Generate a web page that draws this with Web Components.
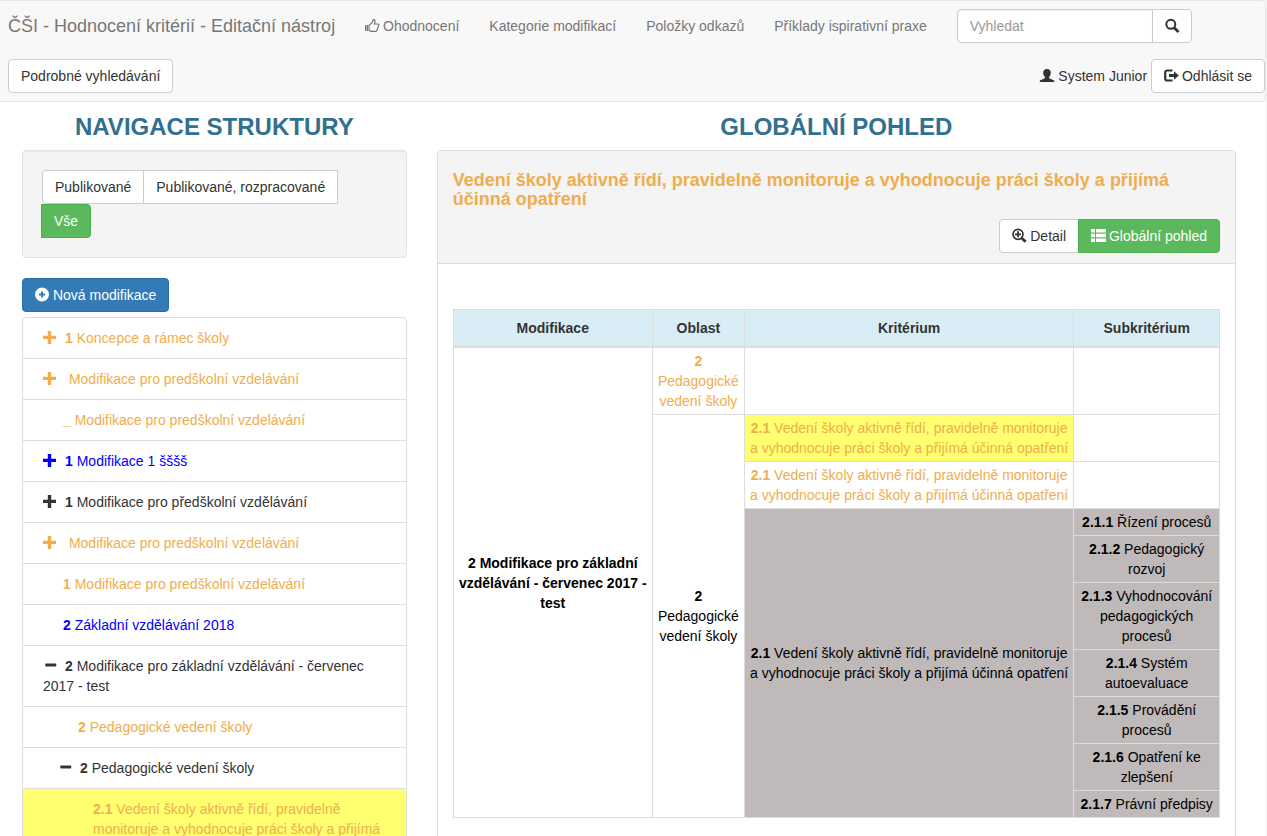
<!DOCTYPE html>
<html lang="cs">
<head>
<meta charset="utf-8">
<title>ČŠI - Hodnocení kritérií - Editační nástroj</title>
<style>
html { background: #fff; }
body { margin: 0; border-right: 1px solid #f4f4f4; font: 14px/20px "Liberation Sans", Arial, sans-serif; color: #333; }
</style>
</head>
<body>
<csi-navbar></csi-navbar>
<csi-layout>
  <csi-heading slot="side">NAVIGACE STRUKTURY</csi-heading>
  <csi-filter slot="side"></csi-filter>
  <csi-button slot="side" kind="primary" icon="plus-sign">Nová modifikace</csi-button>
  <csi-tree slot="side">
    <csi-node tone="draft" mark="plus" code="1">Koncepce a rámec školy</csi-node>
    <csi-node tone="draft" mark="plus">Modifikace pro predškolní vzdelávání</csi-node>
    <csi-node tone="draft" code="_">Modifikace pro predškolní vzdelávání</csi-node>
    <csi-node tone="ready" mark="plus" code="1">Modifikace 1 šššš</csi-node>
    <csi-node mark="plus" code="1">Modifikace pro předškolní vzdělávání</csi-node>
    <csi-node tone="draft" mark="plus">Modifikace pro predškolní vzdelávání</csi-node>
    <csi-node tone="draft" code="1">Modifikace pro predškolní vzdelávání</csi-node>
    <csi-node tone="ready" code="2">Základní vzdělávání 2018</csi-node>
    <csi-node mark="minus" code="2">Modifikace pro základní vzdělávání - červenec 2017 - test</csi-node>
    <csi-node tone="draft" level="1" code="2">Pedagogické vedení školy</csi-node>
    <csi-node level="1" mark="minus" code="2">Pedagogické vedení školy</csi-node>
    <csi-node tone="draft" level="2" selected code="2.1">Vedení školy aktivně řídí, pravidelně monitoruje a vyhodnocuje práci školy a přijímá účinná opatření</csi-node>
  </csi-tree>
  <csi-heading slot="main">GLOBÁLNÍ POHLED</csi-heading>
  <csi-panel slot="main">
    <span slot="title">Vedení školy aktivně řídí, pravidelně monitoruje a vyhodnocuje práci školy a přijímá účinná opatření</span>
    <csi-overview></csi-overview>
  </csi-panel>
</csi-layout>

<script>
const define = (name, html, setup) => {
  const template = document.createElement('template');
  template.innerHTML = html;
  customElements.define(name, class extends HTMLElement {
    constructor() {
      super();
      this.attachShadow({ mode: 'open' }).append(template.content.cloneNode(true));
    }
    connectedCallback() { if (setup) setup(this, this.shadowRoot); }
  });
};

const icons = {
  'thumbs-up': '<path d="M0 6h1v6H0zM1.500 6h1.500v6H1.500z" fill="currentColor"/><path d="M4 6.500 6.800 4 8.300.7c1.900 0 2 1.500 1.300 3.600l-.2.700h3.300c1.200 0 1.400 1.300.9 1.800L12 11.300c-.3.800-.6 1.100-1.400 1.100H6.800c-1.100 0-1.900-.8-2.800-.9z" fill="none" stroke="currentColor" stroke-width="1.200"/>',
  search: '<circle cx="5.800" cy="5.300" r="4.500" fill="none" stroke="currentColor" stroke-width="2"/><path d="m9.200 8.700 4.300 4.300" stroke="currentColor" stroke-width="2.800"/>',
  user: '<path d="M7 0c2.400 0 3.800 1.500 3.800 3.700 0 1.900-.8 3.400-1.700 4.300-.3 1 .1 1.300.9 1.700l3.200 1.300c.8.400 1.100.7 1.100 2H-.3c0-1.300.3-1.600 1.100-2L4 9.700c.8-.4 1.200-.7.9-1.700C4 7.100 3.200 5.600 3.200 3.700 3.200 1.500 4.600 0 7 0z" fill="currentColor"/>',
  'log-out': '<path d="M8.500 1.500H3.200a2 2 0 0 0-2 2v6a2 2 0 0 0 2 2h5.300" fill="none" stroke="currentColor" stroke-width="2.200"/><path d="M5 5h5V2.300l4.800 4.200L10 10.700V8H5z" fill="currentColor"/>',
  'plus-sign': '<path fill-rule="evenodd" d="M7-.5a7 7 0 1 1 0 14 7 7 0 0 1 0-14zM6 3.500v2H4v2h2v2h2v-2h2v-2H8v-2z" fill="currentColor"/>',
  'zoom-in': '<circle cx="6" cy="5.300" r="5" fill="none" stroke="currentColor" stroke-width="1.700"/><path d="M5.100 2.300h1.800v2.100H9v1.800H6.900v2.100H5.100V6.200H3V4.400h2.100z" fill="currentColor"/><path d="m9.600 9 4 3.800" stroke="currentColor" stroke-width="2.800"/>',
  list: '<path d="M0 0h4v3.500H0zM5 0h10v3.500H5zM0 4.700h4v3.500H0zM5 4.700h10v3.500H5zM0 9.400h4v3.500H0zM5 9.400h10v3.500H5z" fill="currentColor"/>',
  plus: '<path d="M4.800 0h3.400v4.700H13V8H8.200v5H4.800V8H0V4.700h4.800z" fill="currentColor"/>',
  minus: '<path d="M3 4.500h9.500a.7.700 0 0 1 .7.700v1.600a.7.700 0 0 1-.7.700H3a.7.700 0 0 1-.7-.7V5.200a.7.700 0 0 1 .7-.7z" fill="currentColor"/>'
};

define('csi-icon', `
  <style>
    :host { display: inline-block; width: 14px; height: 13px; vertical-align: -1px; }
    svg { display: block; width: 15px; height: 13px; overflow: visible; }
  </style>
  <svg viewBox="0 0 15 13" aria-hidden="true"></svg>`,
  (host, root) => { root.querySelector('svg').innerHTML = icons[host.getAttribute('name')] || ''; });

define('csi-button', `
  <style>
    :host { display: inline-block; vertical-align: middle; }
    button { display: block; margin: 0; padding: 6px 12px; border: 1px solid #ccc; border-radius: 4px;
      background: #fff; color: #333; font: inherit; white-space: nowrap; cursor: pointer; }
    :host([kind="primary"]) button { background: #337ab7; border-color: #2e6da4; color: #fff; }
    :host([kind="success"]) button { background: #5cb85c; border-color: #4cae4c; color: #fff; }
    :host([place="first"]) button { border-radius: 4px 0 0 4px; }
    :host([place="middle"]) button { border-radius: 0; }
    :host([place="last"]) button { border-radius: 0 4px 4px 0; }
    :host([place="middle"]), :host([place="last"]) { margin-left: -1px; }
  </style>
  <button type="button"><span></span><slot></slot></button>`,
  (host, root) => {
    const name = host.getAttribute('icon');
    if (name) root.querySelector('span').innerHTML = '<csi-icon name="' + name + '"></csi-icon> ';
    if (host.hasAttribute('label')) root.querySelector('button').setAttribute('aria-label', host.getAttribute('label'));
  });

define('csi-navbar', `
  <style>
    :host { display: block; background: #f8f8f8; border: 1px solid #e7e7e7; border-left: 0; border-radius: 0 4px 4px 0; }
    nav { display: flex; flex-wrap: wrap; align-items: center; }
    a { color: #777; text-decoration: none; padding: 15px; }
    .brand { font-size: 18px; padding-left: 8px; }
    form { display: flex; padding: 8px 15px; }
    input { box-sizing: border-box; width: 196px; height: 34px; margin: 0; padding: 6px 12px; border: 1px solid #ccc;
      border-radius: 4px 0 0 4px; background: #fff; color: #555; font: inherit; box-shadow: inset 0 1px 1px rgba(0,0,0,.075); }
    input::placeholder { color: #999; opacity: 1; }
    .tools { display: flex; flex: 1 0 100%; box-sizing: border-box; align-items: center; justify-content: space-between; padding: 8px 0 8px 8px; }
    .account { display: flex; align-items: center; gap: 4px; }
  </style>
  <nav aria-label="Hlavní">
    <a class="brand" href="#">ČŠI - Hodnocení kritérií - Editační nástroj</a>
    <a href="#"><csi-icon name="thumbs-up"></csi-icon> Ohodnocení</a>
    <a href="#">Kategorie modifikací</a>
    <a href="#">Položky odkazů</a>
    <a href="#">Příklady ispirativní praxe</a>
    <form role="search"><input type="text" placeholder="Vyhledat" aria-label="Vyhledat"><csi-button place="last" label="Hledat" icon="search"></csi-button></form>
    <div class="tools">
      <csi-button>Podrobné vyhledávání</csi-button>
      <div class="account"><span><csi-icon name="user"></csi-icon> System Junior</span><csi-button icon="log-out">Odhlásit se</csi-button></div>
    </div>
  </nav>`);

define('csi-layout', `
  <style>
    :host { display: grid; grid-template-columns: minmax(0, 1fr) minmax(0, 2fr); margin: 0 15px 0 7px; }
    div { padding: 0 15px; }
  </style>
  <div><slot name="side"></slot></div>
  <div><slot name="main"></slot></div>`);

define('csi-heading', `
  <style>
    :host { display: block; }
    h2 { margin: 12px 0 10px; font-size: 24px; line-height: 26px; font-weight: 700; text-align: center; color: #31708f; }
  </style>
  <h2><slot></slot></h2>`);

define('csi-filter', `
  <style>
    :host { display: block; margin-bottom: 20px; padding: 19px; background: #f4f4f4; border: 1px solid #e3e3e3; border-radius: 4px;
      box-shadow: inset 0 1px 1px rgba(0,0,0,.05); }
    div { display: flex; flex-wrap: wrap; }
  </style>
  <div role="group" aria-label="Stav">
    <csi-button place="first">Publikované</csi-button>
    <csi-button place="middle">Publikované, rozpracované</csi-button>
    <csi-button place="last" kind="success">Vše</csi-button>
  </div>`);

define('csi-tree', `
  <style>
    :host { display: block; margin: 5px 0 20px; border: 1px solid #ddd; border-radius: 4px; }
  </style>
  <div role="tree"><slot></slot></div>`);

define('csi-node', `
  <style>
    :host { display: block; padding: 10px 20px; border-bottom: 1px solid #ddd; color: #333; }
    :host([tone="draft"]) { color: #f0ad4e; }
    :host([tone="ready"]) { color: #00f; }
    :host([level="1"]) { padding-left: 35px; }
    :host([level="2"]) { padding-left: 70px; }
    :host([selected]) { background: #ffff70; }
    csi-icon { margin-right: 8px; }
    .indent { padding-left: 20px; }
  </style>
  <div role="treeitem"><span class="lead"></span><b></b> <slot></slot></div>`,
  (host, root) => {
    const mark = host.getAttribute('mark'), code = host.getAttribute('code');
    const lead = root.querySelector('.lead');
    if (mark) lead.innerHTML = '<csi-icon name="' + mark + '"></csi-icon>';
    else if (host.getAttribute('level') !== '2') lead.classList.add('indent');
    if (code) root.querySelector('b').textContent = code;
  });

define('csi-panel', `
  <style>
    :host { display: block; border: 1px solid #ddd; border-radius: 4px; }
    header { padding: 20px 15px 10px; background: #f4f4f4; border-bottom: 1px solid #ddd; border-radius: 3px 3px 0 0; }
    h3 { margin: 0 0 10px; font-size: 18px; line-height: 19px; font-weight: 700; color: #f0ad4e; }
    .views { display: flex; justify-content: flex-end; }
    .body { padding: 45px 15px 35px; }
  </style>
  <header>
    <h3><slot name="title"></slot></h3>
    <div class="views" role="group" aria-label="Zobrazení">
      <csi-button place="first" icon="zoom-in">Detail</csi-button>
      <csi-button place="last" kind="success" icon="list">Globální pohled</csi-button>
    </div>
  </header>
  <div class="body"><slot></slot></div>`);

define('csi-overview', `
  <style>
    :host { display: block; }
    table { width: 100%; border-collapse: collapse; border: 1px solid #ddd; table-layout: fixed; }
    .modification { width: 26%; } .area { width: 12%; } .sub { width: 19%; }
    th, td { padding: 3px; border: 1px solid #ddd; text-align: center; vertical-align: middle; color: #000; }
    thead th { padding: 8px; background: #d9edf7; border-bottom-width: 2px; color: #333; }
    td.draft { color: #f0ad4e; }
    .selected { background: #ffff70; }
    .closed { background: #bfb9b9; }
  </style>
  <table>
    <colgroup><col class="modification"><col class="area"><col class="criterion"><col class="sub"></colgroup>
    <thead><tr><th scope="col">Modifikace</th><th scope="col">Oblast</th><th scope="col">Kritérium</th><th scope="col">Subkritérium</th></tr></thead>
    <tbody>
      <tr><th rowspan="10" scope="rowgroup">2 Modifikace pro základní vzdělávání - červenec 2017 - test</th><td class="draft"><b>2</b> Pedagogické vedení školy</td><td></td><td></td></tr>
      <tr><td rowspan="9"><b>2</b> Pedagogické vedení školy</td><td class="draft selected"><b>2.1</b> Vedení školy aktivně řídí, pravidelně monitoruje a vyhodnocuje práci školy a přijímá účinná opatření</td><td></td></tr>
      <tr><td class="draft"><b>2.1</b> Vedení školy aktivně řídí, pravidelně monitoruje a vyhodnocuje práci školy a přijímá účinná opatření</td><td></td></tr>
      <tr><td rowspan="7" class="closed"><b>2.1</b> Vedení školy aktivně řídí, pravidelně monitoruje a vyhodnocuje práci školy a přijímá účinná opatření</td><td class="closed"><b>2.1.1</b> Řízení procesů</td></tr>
      <tr><td class="closed"><b>2.1.2</b> Pedagogický rozvoj</td></tr>
      <tr><td class="closed"><b>2.1.3</b> Vyhodnocování pedagogických procesů</td></tr>
      <tr><td class="closed"><b>2.1.4</b> Systém autoevaluace</td></tr>
      <tr><td class="closed"><b>2.1.5</b> Provádění procesů</td></tr>
      <tr><td class="closed"><b>2.1.6</b> Opatření ke zlepšení</td></tr>
      <tr><td class="closed"><b>2.1.7</b> Právní předpisy</td></tr>
    </tbody>
  </table>`);
</script>
</body>
</html>
